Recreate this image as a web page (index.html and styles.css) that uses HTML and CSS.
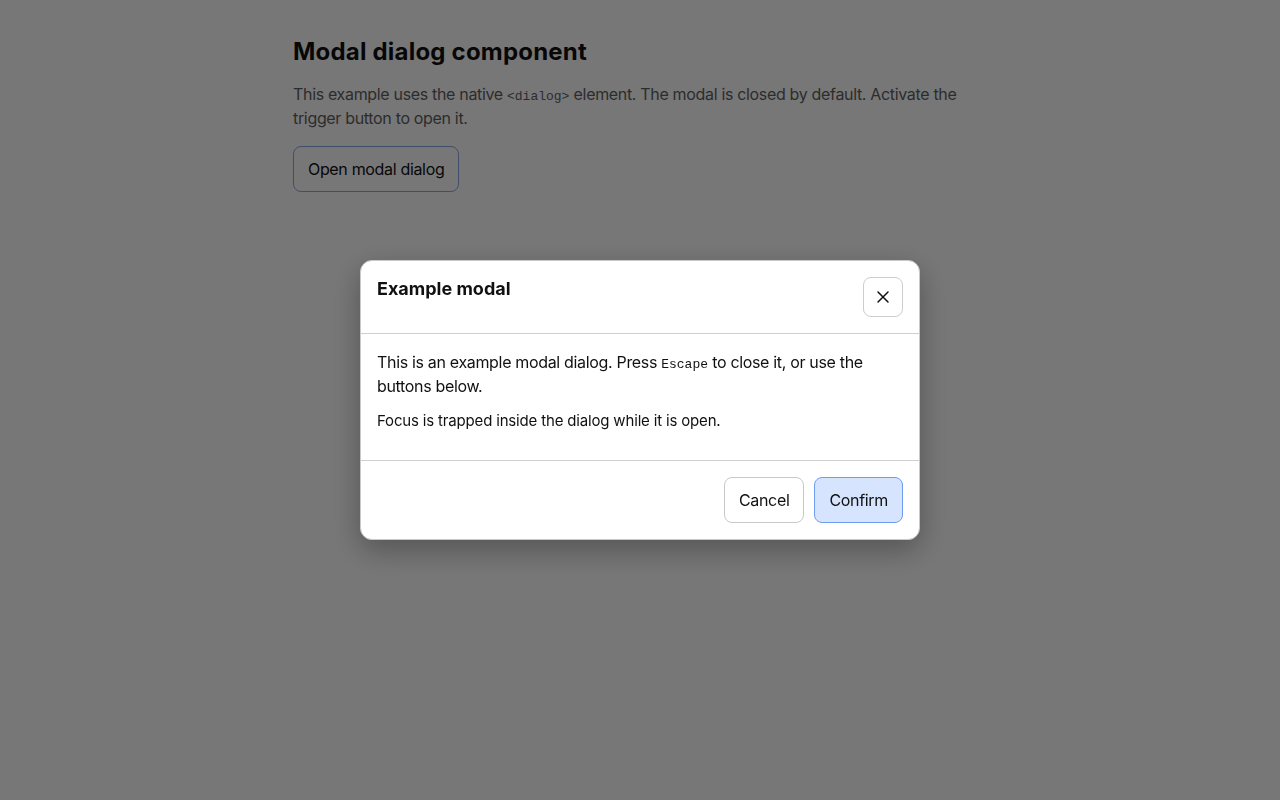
FILE: index.html
```html
<!DOCTYPE html>
<html lang="en">
<head>
<meta charset="utf-8">
<title>Modal dialog component</title>
<link rel="stylesheet" href="styles.css">
</head>
<body>
<main class="page">
  <h1 class="page-title">Modal dialog component</h1>
  <p class="page-intro">This example uses the native <code>&lt;dialog&gt;</code> element. The modal is closed by default. Activate the trigger button to open it.</p>
  <button class="btn btn-trigger" type="button">Open modal dialog</button>
</main>

<div class="backdrop">
  <div class="modal" role="dialog" aria-modal="true" aria-labelledby="modal-title">
    <header class="modal-header">
      <h2 class="modal-title" id="modal-title">Example modal</h2>
      <button class="btn-close" type="button" aria-label="Close">
        <svg width="14" height="14" viewBox="0 0 14 14" aria-hidden="true"><path d="M2 2 L12 12 M12 2 L2 12" stroke="#111" stroke-width="1.5" stroke-linecap="round" fill="none"/></svg>
      </button>
    </header>
    <div class="modal-body">
      <p>This is an example modal dialog. Press <code>Escape</code> to close it, or use the buttons below.</p>
      <p class="modal-note">Focus is trapped inside the dialog while it is open.</p>
    </div>
    <footer class="modal-footer">
      <button class="btn" type="button">Cancel</button>
      <button class="btn btn-primary" type="button">Confirm</button>
    </footer>
  </div>
</div>
</body>
</html>
```

FILE: styles.css
```css
* { box-sizing: border-box; }

html, body {
  margin: 0;
  padding: 0;
  background: #ffffff;
  font-family: Inter, "Noto Sans", "Liberation Sans", sans-serif;
  color: #111;
}

.page {
  width: 694px;
  margin: 0 auto;
  padding-top: 38px;
}

.page-title {
  margin: 0 0 16px;
  font-size: 24px;
  line-height: 28px;
  font-weight: 700;
  letter-spacing: 0.2px;
}

.page-intro {
  margin: 0 0 16px;
  font-size: 16px;
  line-height: 24px;
  letter-spacing: -0.33px;
  color: #5f5f5f;
}

code {
  font-family: "Liberation Mono", "DejaVu Sans Mono", monospace;
  font-size: 13px;
  line-height: 1;
  letter-spacing: 0;
}

.btn {
  font-family: inherit;
  font-size: 16px;
  line-height: 20px;
  letter-spacing: -0.33px;
  padding: 12px 14px;
  border: 1px solid #c8c8c8;
  border-radius: 8px;
  background: #fff;
  color: #111;
  cursor: pointer;
}

.btn-trigger {
  border-color: #8ea6e6;
}

.btn-primary {
  background: #d6e4fe;
  border-color: #6e9cf0;
}

.backdrop {
  position: fixed;
  inset: 0;
  background: rgba(0, 0, 0, 0.533);
  display: flex;
  align-items: center;
  justify-content: center;
}

.modal {
  width: 560px;
  background: #fff;
  border: 1px solid #c9c9c9;
  border-radius: 12px;
  box-shadow: 0 10px 30px rgba(0, 0, 0, 0.3);
  overflow: hidden;
}

.modal-header {
  display: flex;
  align-items: flex-start;
  justify-content: space-between;
  padding: 16px;
  border-bottom: 1px solid #cfcfcf;
}

.modal-title {
  margin: 0;
  padding-top: 1px;
  font-size: 18px;
  line-height: 22px;
  font-weight: 700;
  color: #111;
}

.btn-close {
  width: 40px;
  height: 40px;
  display: flex;
  align-items: center;
  justify-content: center;
  padding: 0;
  border: 1px solid #cdcdcd;
  border-radius: 8px;
  background: #fff;
  cursor: pointer;
}

.modal-body {
  padding: 16px;
}

.modal-body p {
  margin: 0 0 12px;
  font-size: 16px;
  line-height: 24px;
  letter-spacing: -0.33px;
  color: #111;
}

.modal-body .modal-note {
  font-size: 15px;
  line-height: 22px;
  letter-spacing: -0.17px;
}

.modal-footer {
  display: flex;
  justify-content: flex-end;
  gap: 10px;
  padding: 16px;
  border-top: 1px solid #cfcfcf;
}
```
